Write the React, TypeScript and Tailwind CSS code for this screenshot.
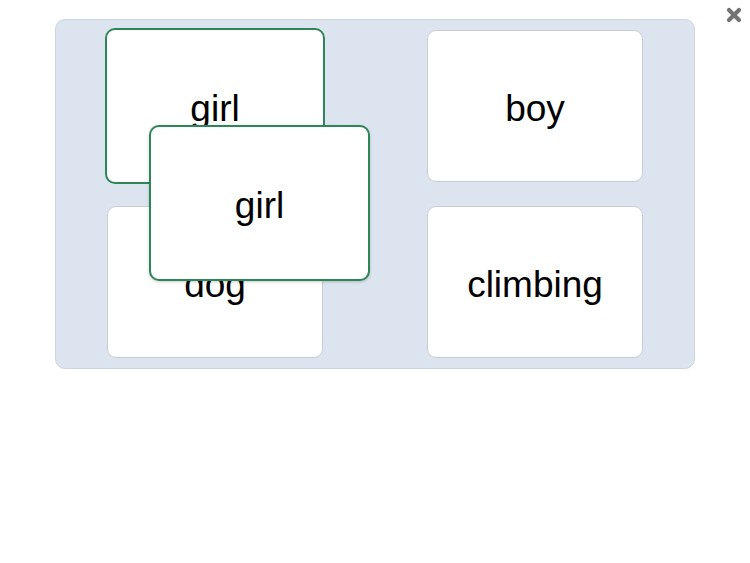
const cards = [
    { id: "girl", label: "girl", selected: true },
    { id: "boy", label: "boy" },
    { id: "dog", label: "dog" },
    { id: "climbing", label: "climbing" },
];

const Card = ({ label, selected }: { label: string; selected?: boolean }) =>
    selected ? (
        <div className="-m-[2px] w-[220px] h-[156px] rounded-[10px] bg-white border-2 border-[#2e8555] flex items-center justify-center text-[37px] text-black">
            <span className="mt-[6px]">{label}</span>
        </div>
    ) : (
        <div className="w-[216px] h-[152px] rounded-[9px] bg-white border border-[#c9ced6] flex items-center justify-center text-[37px] text-black">
            <span className="mt-[6px]">{label}</span>
        </div>
    );

export default function App() {
    return (
        <div
            className="relative w-[750px] h-[563px] bg-white overflow-hidden"
            style={{ fontFamily: '"Liberation Sans", Arial, sans-serif' }}
        >
            <button className="absolute left-[726px] top-[7px]">
                <svg width="16" height="16" viewBox="0 0 16 16">
                    <path d="M3 3 L13 13 M13 3 L3 13" stroke="#737373" strokeWidth="4.2" strokeLinecap="round" />
                </svg>
            </button>

            <div className="ml-[55px] mt-[19px] w-[640px] h-[350px] rounded-[10px] bg-[#dce5ef] border border-[#cdd5de] pt-[10px] pl-[51px]">
                <div className="grid grid-cols-[216px_216px] gap-x-[104px] gap-y-[24px]">
                    {cards.map((c) => (
                        <div key={c.id} className="flex">
                            <Card label={c.label} selected={c.selected} />
                        </div>
                    ))}
                </div>
            </div>

            {/* card being dragged */}
            <div className="absolute left-[149px] top-[125px] w-[221px] h-[156px] rounded-[10px] bg-white border-2 border-[#2e8555] shadow-[0_1px_3px_rgba(0,0,0,0.2)] flex items-center justify-center text-[37px] text-black">
                <span className="mt-[6px]">girl</span>
            </div>
        </div>
    );
}
